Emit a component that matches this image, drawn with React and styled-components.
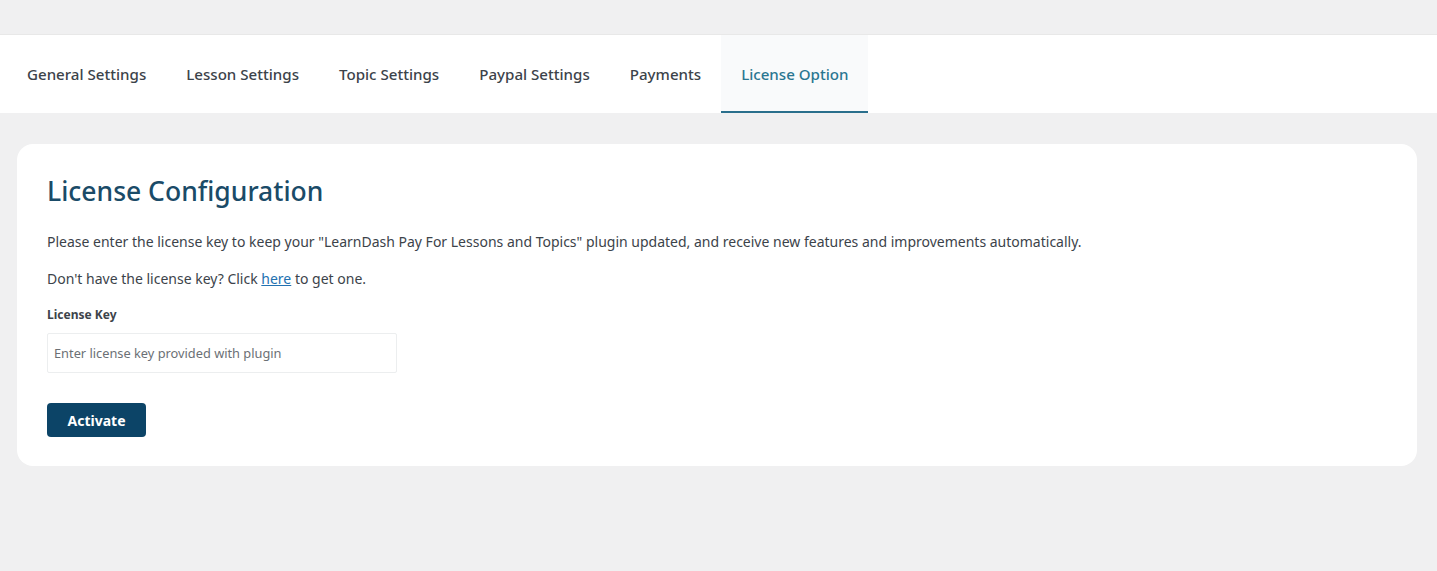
import React from 'react'
import styled, { createGlobalStyle } from 'styled-components'

///Global

const GlobalStyle = createGlobalStyle`
    html, body {
        margin: 0;
        padding: 0;
        background: #f0f0f1;
        font-family: "Noto Sans", "Open Sans", sans-serif;
        color: #3c434a;
    }
`

///Styled Components

const Page = styled.div`
    padding-top: 34px;
    min-height: 571px;
    box-sizing: border-box;
`

const TabBar = styled.nav`
    display: flex;
    height: 79px;
    padding-left: 7px;
    background: #ffffff;
    border-top: 1px solid #e8e8e8;
    box-sizing: border-box;
`

const Tab = styled.a`
    display: flex;
    align-items: center;
    padding: 2px 20px 0;
    font-size: 15.1px;
    font-weight: 500;
    text-decoration: none;
    white-space: nowrap;
    color: ${props => props.active ? '#2a7691' : '#3c434a'};
    background: ${props => props.active ? '#f9fafb' : 'transparent'};
    border-bottom: 2px solid ${props => props.active ? '#2a6f8c' : 'transparent'};
    box-sizing: border-box;
    cursor: pointer;
`

const Card = styled.section`
    margin: 31px 20px 0 17px;
    padding: 30px 30px 29px;
    background: #ffffff;
    border-radius: 16px;
`

const Title = styled.h2`
    margin: 0 0 23px;
    font-size: 26.5px;
    font-weight: 500;
    line-height: 34px;
    color: #1a4b68;
`

const Text = styled.p`
    margin: 0 0 15px;
    font-size: 14px;
    line-height: 22px;
    color: #3c434a;
`

const Link = styled.a`
    color: #2271b1;
    text-decoration: underline;
`

const Label = styled.label`
    display: block;
    margin: 16px 0 10px;
    font-size: 12px;
    font-weight: 700;
    color: #3c434a;
`

const KeyInput = styled.input`
    display: block;
    width: 350px;
    height: 40px;
    padding: 0 6px;
    box-sizing: border-box;
    border: 1px solid #eceeef;
    border-radius: 2px;
    font-family: inherit;
    font-size: 12.8px;
    color: #3c434a;
    outline: none;

    &::placeholder {
        color: #6b7075;
    }
`

const Button = styled.button`
    margin-top: 30px;
    width: 99px;
    height: 34px;
    border: none;
    border-radius: 4px;
    background: #0c4467;
    color: #ffffff;
    font-family: inherit;
    font-size: 14px;
    font-weight: 700;
    cursor: pointer;
`
///End of Styled Components

const tabs = ['General Settings', 'Lesson Settings', 'Topic Settings', 'Paypal Settings', 'Payments', 'License Option']

export default function App() {
    return (
        <Page>
            <GlobalStyle />
            <TabBar>
                {tabs.map(t => (
                    <Tab key={t} active={t === 'License Option' ? 1 : 0}>{t}</Tab>
                ))}
            </TabBar>
            <Card>
                <Title>License Configuration</Title>
                <Text>
                    Please enter the license key to keep your "LearnDash Pay For Lessons and Topics" plugin updated, and receive new features and improvements automatically.
                </Text>
                <Text>
                    Don't have the license key? Click <Link href="#">here</Link> to get one.
                </Text>
                <Label htmlFor="license-key">License Key</Label>
                <KeyInput id="license-key" placeholder="Enter license key provided with plugin" />
                <Button>Activate</Button>
            </Card>
        </Page>
    )
}
